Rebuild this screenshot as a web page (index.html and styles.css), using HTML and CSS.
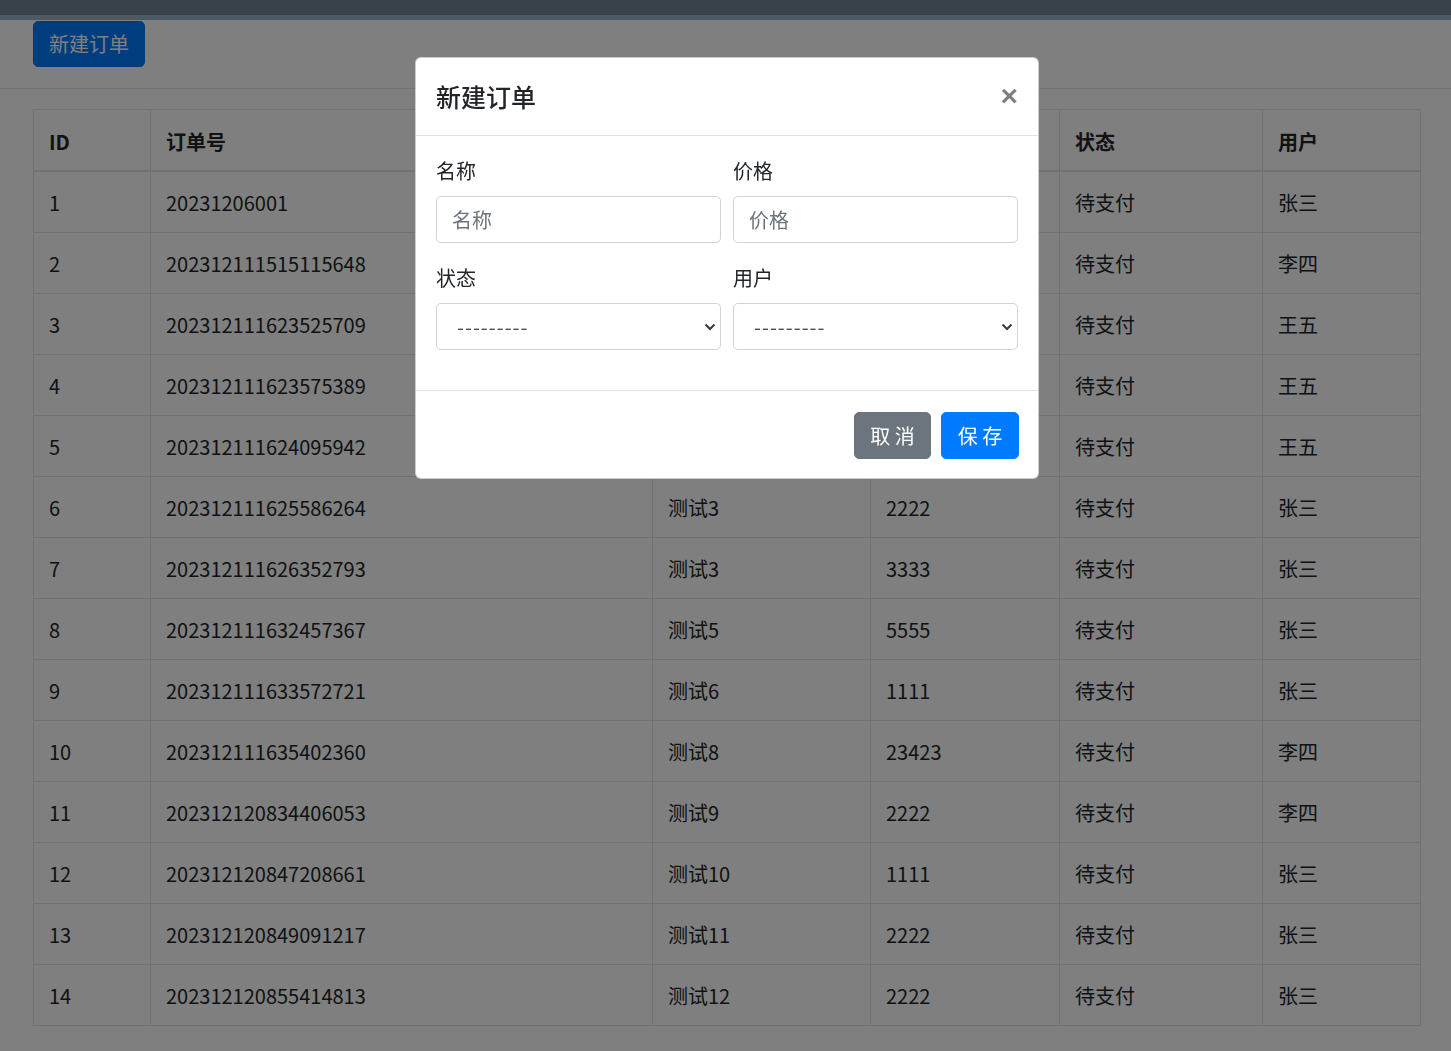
FILE: index.html
```html
<!DOCTYPE html>
<html lang="zh-CN">
<head>
<meta charset="utf-8">
<title>订单</title>
<link rel="stylesheet" href="styles.css">
</head>
<body>
<div class="topbar"></div>
<div class="toolbar">
  <button class="btn btn-primary">新建订单</button>
</div>
<div class="content">
  <table class="table">
    <colgroup>
      <col class="c-id"><col class="c-no"><col class="c-name"><col class="c-price"><col class="c-status"><col class="c-user">
    </colgroup>
    <thead>
      <tr><th>ID</th><th>订单号</th><th>名称</th><th>价格</th><th>状态</th><th>用户</th></tr>
    </thead>
    <tbody>
      <tr><td>1</td><td>20231206001</td><td>测试1</td><td>1111</td><td>待支付</td><td>张三</td></tr>
      <tr><td>2</td><td>202312111515115648</td><td>测试2</td><td>2222</td><td>待支付</td><td>李四</td></tr>
      <tr><td>3</td><td>202312111623525709</td><td>测试3</td><td>3333</td><td>待支付</td><td>王五</td></tr>
      <tr><td>4</td><td>202312111623575389</td><td>测试3</td><td>3333</td><td>待支付</td><td>王五</td></tr>
      <tr><td>5</td><td>202312111624095942</td><td>测试3</td><td>3333</td><td>待支付</td><td>王五</td></tr>
      <tr><td>6</td><td>202312111625586264</td><td>测试3</td><td>2222</td><td>待支付</td><td>张三</td></tr>
      <tr><td>7</td><td>202312111626352793</td><td>测试3</td><td>3333</td><td>待支付</td><td>张三</td></tr>
      <tr><td>8</td><td>202312111632457367</td><td>测试5</td><td>5555</td><td>待支付</td><td>张三</td></tr>
      <tr><td>9</td><td>202312111633572721</td><td>测试6</td><td>1111</td><td>待支付</td><td>张三</td></tr>
      <tr><td>10</td><td>202312111635402360</td><td>测试8</td><td>23423</td><td>待支付</td><td>李四</td></tr>
      <tr><td>11</td><td>202312120834406053</td><td>测试9</td><td>2222</td><td>待支付</td><td>李四</td></tr>
      <tr><td>12</td><td>202312120847208661</td><td>测试10</td><td>1111</td><td>待支付</td><td>张三</td></tr>
      <tr><td>13</td><td>202312120849091217</td><td>测试11</td><td>2222</td><td>待支付</td><td>张三</td></tr>
      <tr><td>14</td><td>202312120855414813</td><td>测试12</td><td>2222</td><td>待支付</td><td>张三</td></tr>
    </tbody>
  </table>
</div>

<div class="backdrop"></div>
<div class="modal">
  <div class="modal-dialog">
    <div class="modal-header">
      <h5 class="modal-title">新建订单</h5>
      <button class="close" type="button">&times;</button>
    </div>
    <div class="modal-body">
      <div class="form-row">
        <div class="form-group">
          <label>名称</label>
          <input class="form-control" type="text" placeholder="名称">
        </div>
        <div class="form-group">
          <label>价格</label>
          <input class="form-control" type="text" placeholder="价格">
        </div>
      </div>
      <div class="form-row">
        <div class="form-group">
          <label>状态</label>
          <div class="select-wrap">
            <select class="form-select"><option>---------</option></select>
            <svg class="chev" width="12" height="8" viewBox="0 0 12 8"><path d="M1.5 1.5 L6 6 L10.5 1.5" fill="none" stroke="#343a40" stroke-width="2"/></svg>
          </div>
        </div>
        <div class="form-group">
          <label>用户</label>
          <div class="select-wrap">
            <select class="form-select"><option>---------</option></select>
            <svg class="chev" width="12" height="8" viewBox="0 0 12 8"><path d="M1.5 1.5 L6 6 L10.5 1.5" fill="none" stroke="#343a40" stroke-width="2"/></svg>
          </div>
        </div>
      </div>
    </div>
    <div class="modal-footer">
      <button class="btn btn-secondary btn-cancel">取 消</button>
      <button class="btn btn-primary btn-save">保 存</button>
    </div>
  </div>
</div>
</body>
</html>
```
FILE: styles.css
```css
* { box-sizing: border-box; }
html, body {
  margin: 0;
  padding: 0;
  background: #fff;
}
body {
  font-family: "Noto Sans CJK SC", "Noto Sans", sans-serif;
  font-size: 20px;
  line-height: 30px;
  color: #212529;
  height: 1051px;
  overflow: hidden;
}
.topbar {
  height: 20px;
  background: #6e8494;
  border-bottom: 5px solid #96b4c8;
}
.toolbar {
  padding: 1px 33px 21px;
  border-bottom: 1px solid #e6e6e6;
}
.btn {
  font-family: inherit;
  font-size: 20px;
  line-height: 30px;
  height: 47px;
  padding: 0 15px;
  border: 1px solid transparent;
  border-radius: 5px;
  color: #fff;
  cursor: pointer;
  display: inline-block;
  white-space: nowrap;
}
.toolbar .btn { height: 46px; vertical-align: top; }
.btn-primary { background: #007bff; border-color: #007bff; }
.btn-secondary { background: #6c757d; border-color: #6c757d; }
.content {
  padding: 20px 31px 0 33px;
}
.table {
  width: 1387px;
  border-collapse: collapse;
  table-layout: fixed;
}
.c-id { width: 117px; }
.c-no { width: 502px; }
.c-name { width: 218px; }
.c-price { width: 189px; }
.c-status { width: 203px; }
.c-user { width: 158px; }
.table th, .table td {
  border: 1px solid #dee2e6;
  padding: 15px;
  text-align: left;
  vertical-align: middle;
  line-height: 30px;
  white-space: nowrap;
  overflow: hidden;
}
.table th {
  font-weight: 700;
  border-bottom: 2px solid #dee2e6;
  padding-top: 17px;
  padding-bottom: 13px;
}
.table td { height: 61px; padding-top: 16px; padding-bottom: 14px; }

.backdrop {
  position: fixed;
  inset: 0;
  background: rgba(0, 0, 0, 0.5);
}
.modal {
  position: fixed;
  inset: 0;
}
.modal-dialog {
  width: 624px;
  margin: 57px 0 0 415px;
  background: #fff;
  border: 1px solid rgba(0, 0, 0, 0.2);
  border-radius: 6px;
}
.modal-header {
  display: flex;
  align-items: flex-start;
  padding: 20px;
  border-bottom: 1px solid #dee2e6;
}
.modal-title {
  margin: 0;
  font-size: 25px;
  font-weight: 500;
  line-height: 37px;
}
.close {
  margin: -20px -20px -20px auto;
  padding: 19px 20px 21px;
  background: none;
  border: 0;
  font-family: "Liberation Sans", Arial, sans-serif;
  font-size: 30px;
  font-weight: 700;
  line-height: 37px;
  color: #000;
  opacity: 0.5;
}
.modal-body {
  padding: 20px 20px 0;
}
.form-row {
  display: flex;
  gap: 12px;
}
.form-group {
  flex: 1 1 0;
  margin-bottom: 20px;
}
.form-group label {
  display: block;
  margin-bottom: 10px;
  line-height: 30px;
}
.form-control, .form-select {
  display: block;
  width: 100%;
  height: 47px;
  font-family: inherit;
  font-size: 20px;
  line-height: 30px;
  color: #495057;
  background: #fff;
  border: 1px solid #ced4da;
  border-radius: 5px;
  padding: 0 15px;
}
.form-control::placeholder { color: #6c757d; opacity: 1; }
.select-wrap { position: relative; }
.form-select {
  appearance: none;
  -webkit-appearance: none;
  padding: 0 30px 0 20px;
  letter-spacing: 1px;
}
.chev {
  position: absolute;
  right: 5px;
  top: 20px;
  pointer-events: none;
}
.modal-body .form-row:last-child .form-group { margin-bottom: 40px; }
.modal-footer {
  display: flex;
  justify-content: flex-end;
  gap: 10px;
  padding: 21px 19px 19px 20px;
  border-top: 1px solid #dee2e6;
}
.modal-footer .btn { padding: 0; text-align: center; }
.btn-cancel { width: 77px; }
.btn-save { width: 78px; }
```
